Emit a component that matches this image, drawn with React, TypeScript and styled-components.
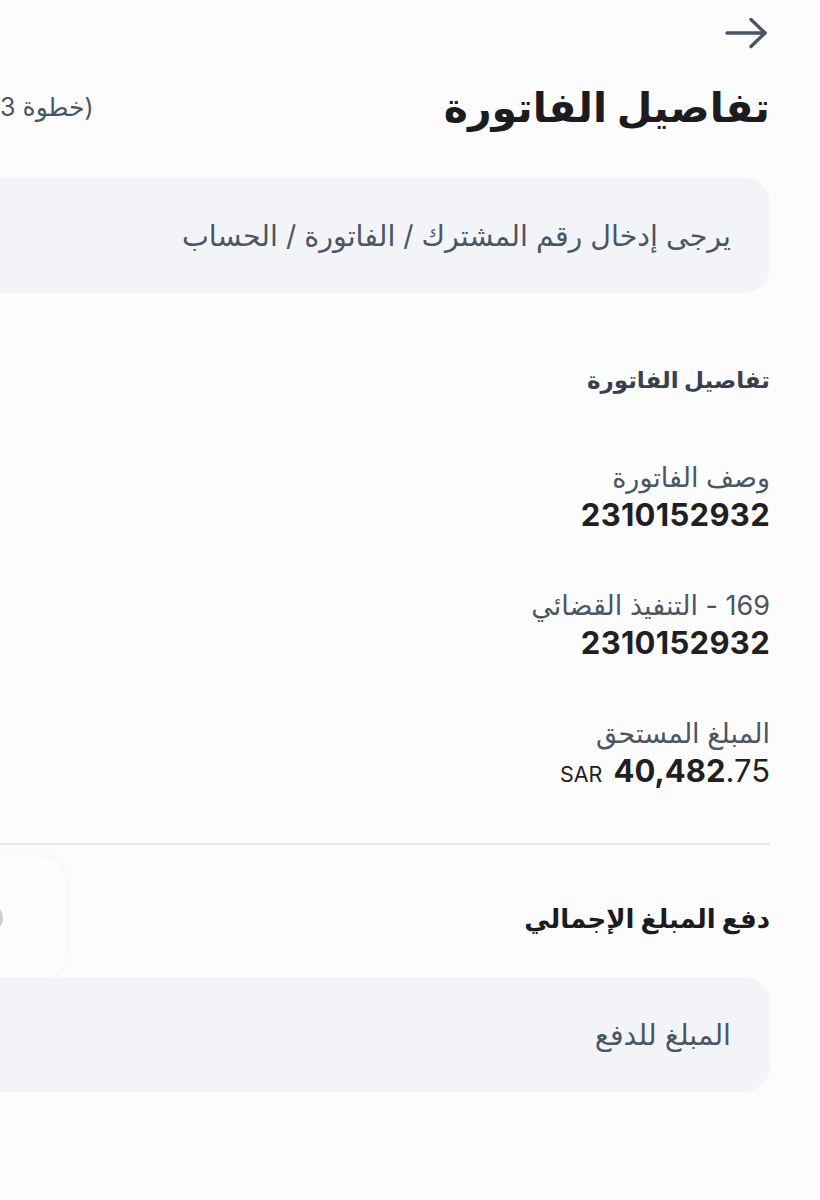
import React from 'react';
import styled, { createGlobalStyle } from 'styled-components';

const GlobalStyle = createGlobalStyle`
  html, body {
    margin: 0;
    padding: 0;
    background: #fcfcfd;
  }
  body {
    font-family: "Inter", "DejaVu Sans", "Noto Sans", sans-serif;
    color: #1f2937;
    overflow: hidden;
  }
`;

const Viewport = styled.div`
  width: 820px;
  min-height: 1200px;
  overflow: hidden;
  direction: rtl;
  background: #fcfcfd;
`;

const Page = styled.div`
  width: 841px;
  margin-right: 50px;
  padding-top: 17px;
  display: flex;
  flex-direction: column;
`;

const BackButton = styled.button`
  align-self: flex-start;
  width: 44px;
  height: 32px;
  margin-right: 2px;
  padding: 0;
  border: none;
  background: transparent;
  color: #4b5563;
  display: flex;
  align-items: center;
  justify-content: center;
  cursor: pointer;
`;

const TitleRow = styled.div`
  display: flex;
  align-items: center;
  justify-content: space-between;
  margin-top: 28px;
  height: 60px;
`;

const Title = styled.h1`
  margin: 0;
  font-size: 41px;
  font-weight: 700;
  color: #1c1c1e;
  line-height: 60px;
`;

const StepText = styled.span`
  font-size: 25px;
  color: #4b5563;
`;

const Field = styled.div<{ $top: number }>`
  margin-top: ${p => p.$top}px;
  height: 115px;
  border-radius: 26px;
  background: #f3f4f8;
  display: flex;
  align-items: center;
  padding: 0 37px;
`;

const FieldInput = styled.input`
  width: 100%;
  border: none;
  background: transparent;
  font-family: inherit;
  font-size: 28.5px;
  color: #1f2937;
  direction: rtl;
  outline: none;

  &::placeholder {
    color: #4b5563;
  }
`;

const SectionTitle = styled.h2`
  margin: 71px 0 0;
  font-size: 23px;
  font-weight: 700;
  color: #3a3f4b;
  line-height: 32px;
`;

const DetailList = styled.div`
  margin-top: 64px;
  display: flex;
  flex-direction: column;
  gap: 55px;
`;

const Detail = styled.div`
  display: flex;
  flex-direction: column;
  gap: 1px;
`;

const Label = styled.span`
  font-size: 27px;
  color: #4b5563;
  line-height: 36px;
`;

const Value = styled.span`
  font-size: 31px;
  font-weight: 700;
  letter-spacing: 0.3px;
  color: #1f1f24;
  line-height: 36px;
`;

const Amount = styled.span`
  direction: ltr;
  align-self: flex-start;
  display: flex;
  align-items: baseline;
  gap: 11px;
  line-height: 36px;
  color: #1f1f24;
`;

const Currency = styled.span`
  font-size: 21.5px;
  font-weight: 400;
`;

const AmountNumber = styled.span`
  font-size: 31px;
  font-weight: 700;
`;

const AmountFraction = styled.span`
  font-weight: 400;
`;

const Divider = styled.hr`
  margin: 51px 0 0;
  border: none;
  height: 2px;
  background: #e6e7eb;
`;

const PayRow = styled.div`
  display: flex;
  align-items: center;
  justify-content: space-between;
  padding-top: 14px;
  height: 118px;
`;

const PayTitle = styled.h2`
  margin: 0;
  font-size: 26px;
  font-weight: 700;
  color: #1c1c1e;
`;

const OptionCard = styled.div`
  width: 136px;
  height: 122px;
  border-radius: 24px;
  background: #fdfdfd;
  box-shadow: 0 0 10px rgba(17, 24, 39, 0.035);
  display: flex;
  align-items: center;
  justify-content: flex-end;
  padding-left: 44px;
  box-sizing: border-box;
`;

const Radio = styled.span`
  width: 30px;
  height: 30px;
  box-sizing: border-box;
  border-radius: 50%;
  border: 3px solid #c9ccd2;
  background: #eceef1;
`;

const ArrowIcon = () => (
  <svg width="44" height="32" viewBox="0 0 44 32" fill="none" stroke="currentColor"
    strokeWidth="3.4" strokeLinecap="round" strokeLinejoin="round">
    <path d="M3 16h38" />
    <path d="M27 2.5L41 16 27 29.5" />
  </svg>
);

const details = [
  { label: 'وصف الفاتورة', value: '2310152932' },
  { label: '169 - التنفيذ القضائي', value: '2310152932' },
];

export default function App() {
  return (
    <>
      <GlobalStyle />
      <Viewport>
        <Page>
          <BackButton aria-label="رجوع">
            <ArrowIcon />
          </BackButton>

          <TitleRow>
            <Title>تفاصيل الفاتورة</Title>
            <StepText>(خطوة 3 من 3)</StepText>
          </TitleRow>

          <Field $top={41}>
            <FieldInput placeholder="يرجى إدخال رقم المشترك / الفاتورة / الحساب" />
          </Field>

          <SectionTitle>تفاصيل الفاتورة</SectionTitle>

          <DetailList>
            {details.map((d, i) => (
              <Detail key={i}>
                <Label>{d.label}</Label>
                <Value>{d.value}</Value>
              </Detail>
            ))}
            <Detail>
              <Label>المبلغ المستحق</Label>
              <Amount>
                <Currency>SAR</Currency>
                <AmountNumber>
                  40,482<AmountFraction>.75</AmountFraction>
                </AmountNumber>
              </Amount>
            </Detail>
          </DetailList>

          <Divider />

          <PayRow>
            <PayTitle>دفع المبلغ الإجمالي</PayTitle>
            <OptionCard>
              <Radio />
            </OptionCard>
          </PayRow>

          <Field $top={0}>
            <FieldInput placeholder="المبلغ للدفع" />
          </Field>
        </Page>
      </Viewport>
    </>
  );
}
